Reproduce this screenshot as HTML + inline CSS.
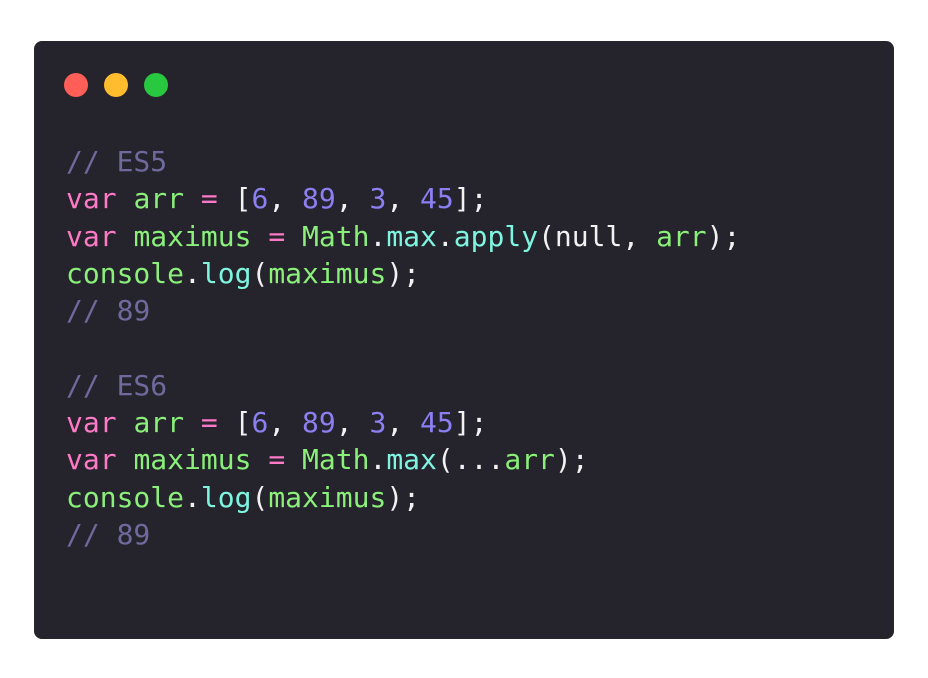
<!DOCTYPE html>
<html><head><meta charset="utf-8"><style>
html,body{margin:0;padding:0;background:#fff;width:928px;height:678px;overflow:hidden}
.card{position:absolute;left:34px;top:41px;width:860px;height:598px;background:#25232c;border-radius:8px}
.dot{position:absolute;top:32px;width:24px;height:24px;border-radius:50%}
pre{position:absolute;left:32px;top:102px;margin:0;font-family:"DejaVu Sans Mono","Liberation Mono",monospace;font-size:28px;line-height:37.3px;color:#f2f2f2}
.c{color:#6f6a9c}.k{color:#ff7ac6}.g{color:#8af07a}.n{color:#8b7ff2}.f{color:#7ef5e0}
</style></head><body>
<div class="card">
<div class="dot" style="left:30px;background:#ff5f57"></div>
<div class="dot" style="left:70px;background:#ffbd2e"></div>
<div class="dot" style="left:110px;background:#28c840"></div>
<pre><span class="c">// ES5</span>
<span class="k">var</span> <span class="g">arr</span> <span class="k">=</span> [<span class="n">6</span>, <span class="n">89</span>, <span class="n">3</span>, <span class="n">45</span>];
<span class="k">var</span> <span class="g">maximus</span> <span class="k">=</span> <span class="g">Math</span>.<span class="f">max</span>.<span class="f">apply</span>(null, <span class="g">arr</span>);
<span class="g">console</span>.<span class="f">log</span>(<span class="g">maximus</span>);
<span class="c">// 89</span>

<span class="c">// ES6</span>
<span class="k">var</span> <span class="g">arr</span> <span class="k">=</span> [<span class="n">6</span>, <span class="n">89</span>, <span class="n">3</span>, <span class="n">45</span>];
<span class="k">var</span> <span class="g">maximus</span> <span class="k">=</span> <span class="g">Math</span>.<span class="f">max</span>(...<span class="g">arr</span>);
<span class="g">console</span>.<span class="f">log</span>(<span class="g">maximus</span>);
<span class="c">// 89</span></pre>
</div>
</body></html>
